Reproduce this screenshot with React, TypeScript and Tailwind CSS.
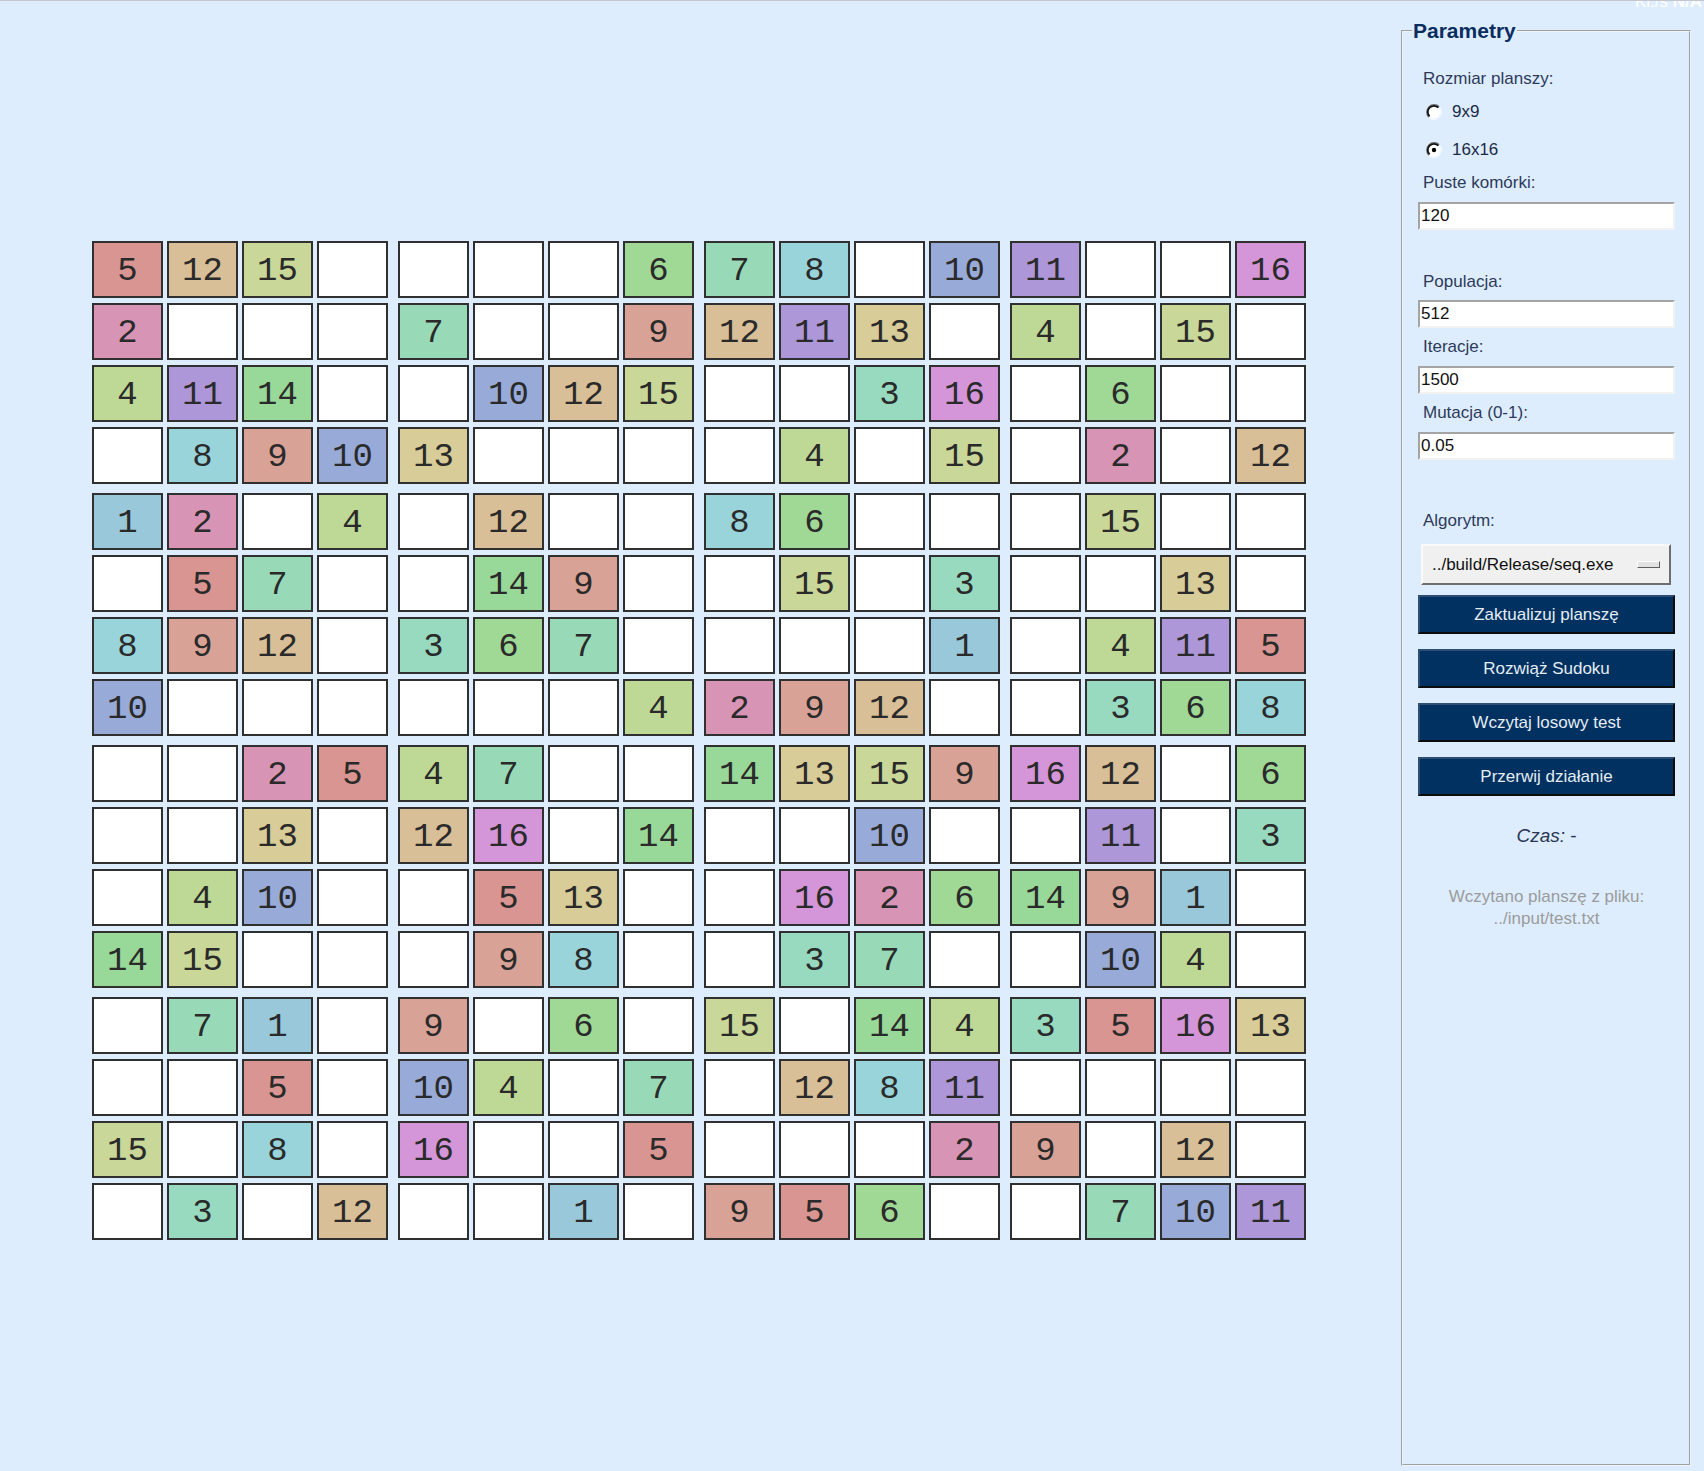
import React from "react";

const BOARD: string[] = [
  "5,12,15,0,0,0,0,6,7,8,0,10,11,0,0,16",
  "2,0,0,0,7,0,0,9,12,11,13,0,4,0,15,0",
  "4,11,14,0,0,10,12,15,0,0,3,16,0,6,0,0",
  "0,8,9,10,13,0,0,0,0,4,0,15,0,2,0,12",
  "1,2,0,4,0,12,0,0,8,6,0,0,0,15,0,0",
  "0,5,7,0,0,14,9,0,0,15,0,3,0,0,13,0",
  "8,9,12,0,3,6,7,0,0,0,0,1,0,4,11,5",
  "10,0,0,0,0,0,0,4,2,9,12,0,0,3,6,8",
  "0,0,2,5,4,7,0,0,14,13,15,9,16,12,0,6",
  "0,0,13,0,12,16,0,14,0,0,10,0,0,11,0,3",
  "0,4,10,0,0,5,13,0,0,16,2,6,14,9,1,0",
  "14,15,0,0,0,9,8,0,0,3,7,0,0,10,4,0",
  "0,7,1,0,9,0,6,0,15,0,14,4,3,5,16,13",
  "0,0,5,0,10,4,0,7,0,12,8,11,0,0,0,0",
  "15,0,8,0,16,0,0,5,0,0,0,2,9,0,12,0",
  "0,3,0,12,0,0,1,0,9,5,6,0,0,7,10,11",
];

const grid: number[][] = BOARD.map((r) => r.split(",").map((n) => parseInt(n, 10)));

const BG: Record<number, string> = {
  0: "bg-white",
  1: "bg-[#98c8da]",
  2: "bg-[#d894b4]",
  3: "bg-[#98dac0]",
  4: "bg-[#bed896]",
  5: "bg-[#d99591]",
  6: "bg-[#a0d896]",
  7: "bg-[#98dab8]",
  8: "bg-[#98d4da]",
  9: "bg-[#d9a296]",
  10: "bg-[#98aad8]",
  11: "bg-[#ad97d8]",
  12: "bg-[#d8bf97]",
  13: "bg-[#d8cc98]",
  14: "bg-[#98d898]",
  15: "bg-[#c9d898]",
  16: "bg-[#d496d8]",
};

function Cell({ v }: { v: number }) {
  return (
    <div
      className={`w-[71px] h-[57px] border-2 border-[#303030] flex items-center justify-center pt-[3px] text-[34px] leading-none text-[#2a2a2a] ${BG[v]}`}
      style={{ fontFamily: '"Liberation Mono", monospace' }}
    >
      {v > 0 ? v : ""}
    </div>
  );
}

function Block({ br, bc }: { br: number; bc: number }) {
  const cells: React.ReactNode[] = [];
  for (let r = 0; r < 4; r++) {
    for (let c = 0; c < 4; c++) {
      cells.push(<Cell key={`${r}-${c}`} v={grid[br * 4 + r][bc * 4 + c]} />);
    }
  }
  return <div className="grid grid-cols-4 gap-x-[4px] gap-y-[5px]">{cells}</div>;
}

function Radio({ checked }: { checked?: boolean }) {
  return (
    <svg width="16" height="16" viewBox="0 0 16 16" className="shrink-0">
      <circle cx="8" cy="8" r="6.5" fill="#ffffff" />
      <path d="M13.3 2.7 A7.5 7.5 0 0 0 2.7 13.3" stroke="#6e6e6e" strokeWidth="1.2" fill="none" />
      <path d="M12.4 3.6 A6.2 6.2 0 0 0 3.6 12.4" stroke="#111111" strokeWidth="1.8" fill="none" />
      <path d="M2.7 13.3 A7.5 7.5 0 0 0 13.3 2.7" stroke="#ffffff" fill="none" />
      {checked && <circle cx="8" cy="8" r="2.2" fill="#000000" />}
    </svg>
  );
}

function Field({ value, className }: { value: string; className: string }) {
  return (
    <input
      readOnly
      value={value}
      className={`block w-full h-[28px] bg-white border-2 border-t-[#a4a4a4] border-l-[#a4a4a4] border-r-[#f2f2f2] border-b-[#f2f2f2] pl-[1px] text-[17px] text-[#111] outline-none ${className}`}
    />
  );
}

function NavyButton({ label, className }: { label: string; className: string }) {
  return (
    <div
      className={`h-[39px] flex items-center justify-center bg-[#003160] border-2 border-t-[#2d4d72] border-l-[#2d4d72] border-r-[#0c0c0c] border-b-[#0c0c0c] text-[17px] text-[#e4ecf4] ${className}`}
    >
      {label}
    </div>
  );
}

export default function App() {
  const blocks: React.ReactNode[] = [];
  for (let br = 0; br < 4; br++) {
    for (let bc = 0; bc < 4; bc++) {
      blocks.push(<Block key={`${br}-${bc}`} br={br} bc={bc} />);
    }
  }

  return (
    <div
      className="relative w-[1704px] h-[1471px] overflow-hidden bg-[#ddedfe] border-t border-[#c3c7cc] flex"
      style={{ fontFamily: '"Liberation Sans", Arial, sans-serif' }}
    >
      <span className="absolute right-[2px] top-[-12px] text-[17px] text-white whitespace-nowrap">
        Kl./s <span className="font-bold">N/A</span>
      </span>

      <div className="flex-1 pl-[92px] pt-[240px]">
        <div className="grid grid-cols-4 gap-x-[10px] gap-y-[9px] w-max">{blocks}</div>
      </div>

      <div className="w-[290px] mr-[13px] mt-[18px] mb-[5px] flex">
        <fieldset className="w-full h-full border-2 [border-style:groove] border-[#eef3f8] min-w-0">
          <legend className="ml-[9px] px-[1px] text-[21px] leading-[24px] font-bold text-[#0b2d5e]">
            Parametry
          </legend>
          <div className="pl-[15px] pr-[14px] flex flex-col text-[17px] leading-[20px] text-[#2d3a5a]">
            <div className="ml-[5px] mt-[26px]">Rozmiar planszy:</div>
            <div className="ml-[8px] mt-[13px] h-[20px] flex items-center gap-[10px] text-[#1c2a48]">
              <Radio />
              <span>9x9</span>
            </div>
            <div className="ml-[8px] mt-[18px] h-[20px] flex items-center gap-[10px] text-[#1c2a48]">
              <Radio checked />
              <span>16x16</span>
            </div>
            <div className="ml-[5px] mt-[13px]">Puste komórki:</div>
            <Field value="120" className="mt-[9px]" />
            <div className="ml-[5px] mt-[42px]">Populacja:</div>
            <Field value="512" className="mt-[8px]" />
            <div className="ml-[5px] mt-[9px]">Iteracje:</div>
            <Field value="1500" className="mt-[9px]" />
            <div className="ml-[5px] mt-[9px]">Mutacja (0-1):</div>
            <Field value="0.05" className="mt-[9px]" />
            <div className="ml-[5px] mt-[51px]">Algorytm:</div>
            <div className="mt-[13px] ml-[3px] mr-[4px] h-[41px] bg-[#f0f0f0] border-2 border-t-[#fafafa] border-l-[#fafafa] border-r-[#6e6e6e] border-b-[#6e6e6e] flex items-center justify-between pl-[9px] pr-[9px] text-[#111]">
              <span>../build/Release/seq.exe</span>
              <span className="w-[23px] h-[7px] bg-[#e2e2e2] border border-t-white border-l-white border-r-[#5e5e5e] border-b-[#5e5e5e]" />
            </div>
            <NavyButton label="Zaktualizuj planszę" className="mt-[10px]" />
            <NavyButton label="Rozwiąż Sudoku" className="mt-[15px]" />
            <NavyButton label="Wczytaj losowy test" className="mt-[15px]" />
            <NavyButton label="Przerwij działanie" className="mt-[15px]" />
            <div className="mt-[29px] text-center text-[19px] leading-[22px] text-[#2a3754]">
              <span className="italic">Czas:</span> -
            </div>
            <div className="mt-[39px] text-center leading-[22px] text-[#9b9b9b]">
              Wczytano planszę z pliku:
              <br />
              ../input/test.txt
            </div>
          </div>
        </fieldset>
      </div>
    </div>
  );
}
